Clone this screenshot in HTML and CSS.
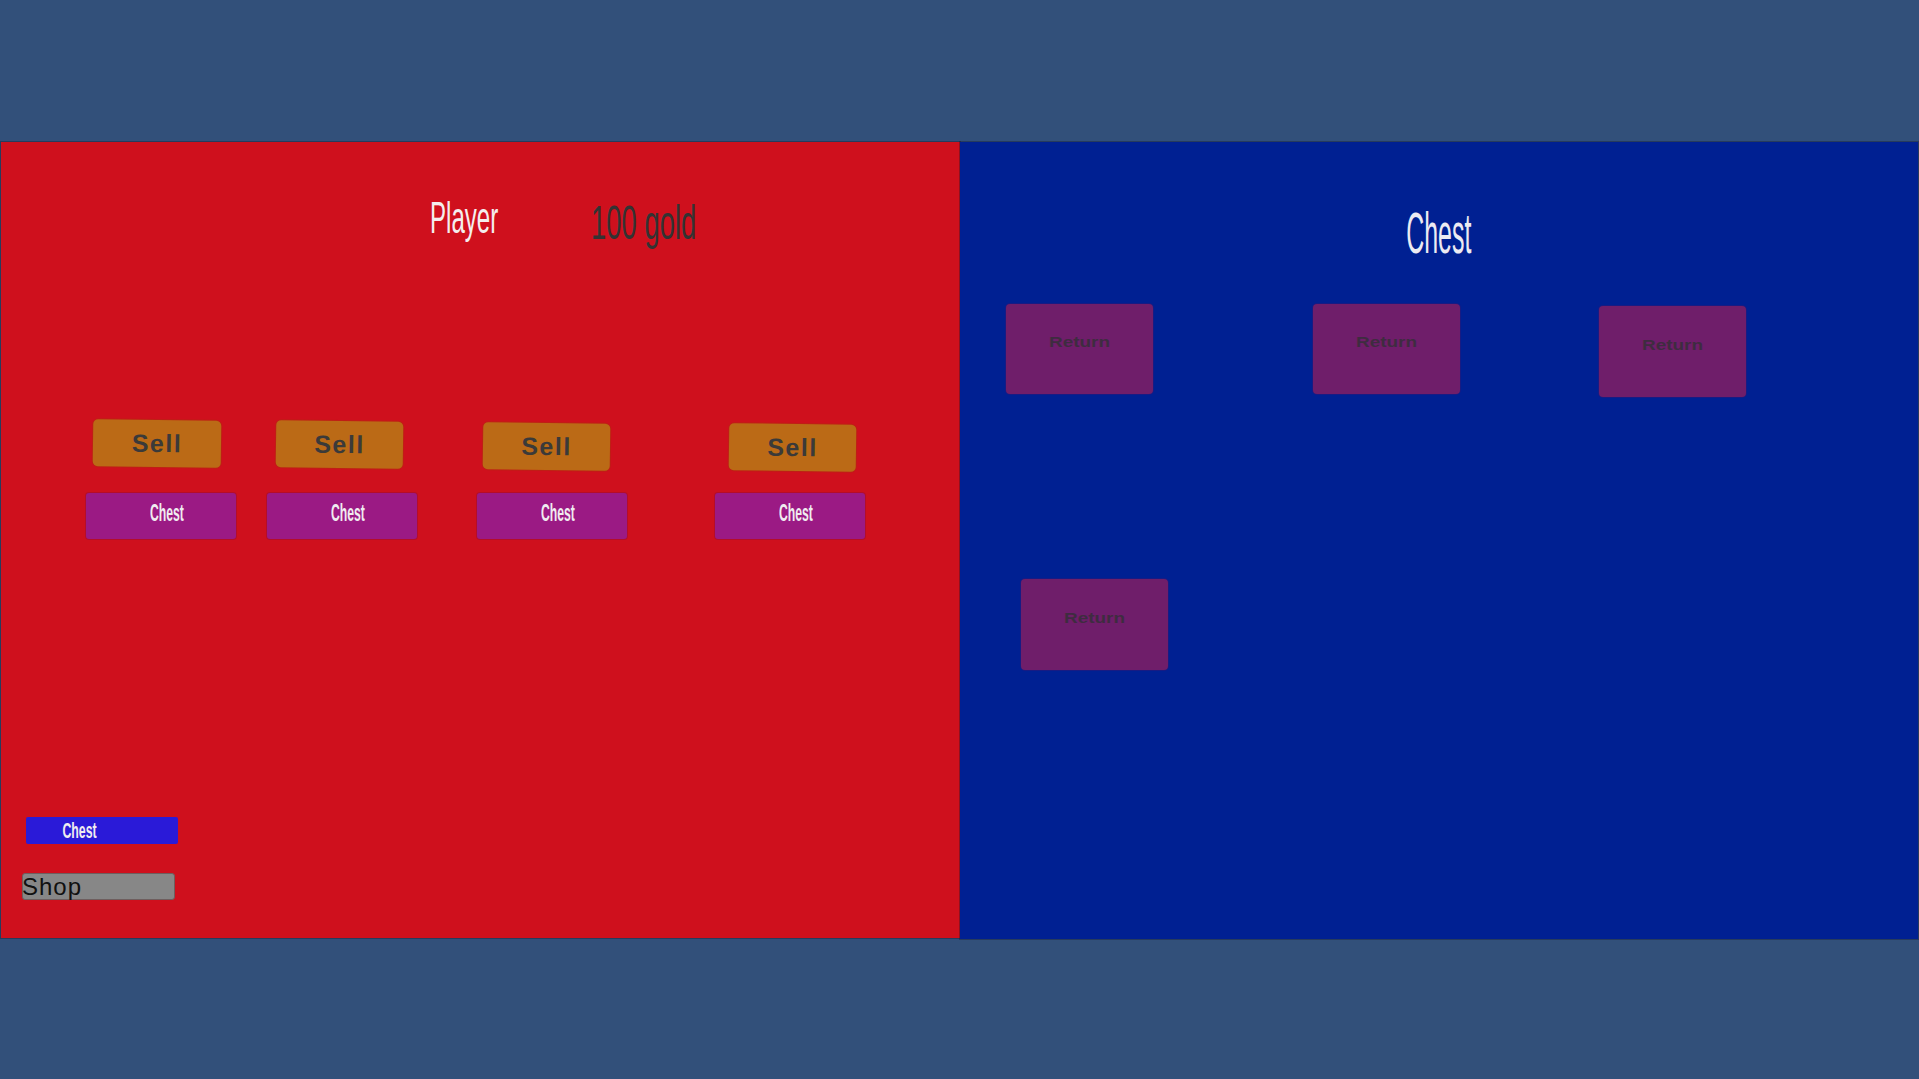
FILE: index.html
```html
<!DOCTYPE html>
<html lang="en">
<head>
    <meta charset="UTF-8">
    <meta name="viewport" content="width=device-width, initial-scale=1.0">
    <title>Player / Chest</title>
    <link rel="stylesheet" href="styles.css">
</head>
<body>
    <div class="screen">
        <div class="panel player-panel">
            <div class="player-head">
                <div class="player-name"><span>Player</span></div>
                <div class="gold"><span>100 gold</span></div>
            </div>

            <div class="slots">
                <div class="slot">
                    <button class="btn-sell">Sell</button>
                    <button class="btn-chest"><span>Chest</span></button>
                </div>
                <div class="slot">
                    <button class="btn-sell">Sell</button>
                    <button class="btn-chest"><span>Chest</span></button>
                </div>
                <div class="slot">
                    <button class="btn-sell">Sell</button>
                    <button class="btn-chest"><span>Chest</span></button>
                </div>
                <div class="slot">
                    <button class="btn-sell">Sell</button>
                    <button class="btn-chest"><span>Chest</span></button>
                </div>
            </div>

            <div class="nav">
                <button class="btn-open-chest"><span>Chest</span></button>
                <button class="btn-shop">Shop</button>
            </div>
        </div>

        <div class="panel chest-panel">
            <div class="chest-title"><span>Chest</span></div>
            <div class="chest-row">
                <button class="btn-return"><span>Return</span></button>
                <button class="btn-return"><span>Return</span></button>
                <button class="btn-return"><span>Return</span></button>
            </div>
            <div class="chest-row second">
                <button class="btn-return"><span>Return</span></button>
            </div>
        </div>
    </div>
</body>
</html>
```

FILE: styles.css
```css
body {
    margin: 0;
    background-color: #32507a;
    font-family: "Liberation Sans", Arial, sans-serif;
    height: 1079px;
    overflow: hidden;
}
button {
    font-family: "Liberation Sans", Arial, sans-serif;
    border: none;
    padding: 0;
    cursor: pointer;
}
.screen {
    display: flex;
    padding: 142px 1px 0 1px;
}
.panel {
    height: 796px;
    display: flex;
    flex-direction: column;
    box-shadow: 0 0 0 1px rgba(20, 20, 40, 0.35);
}
.player-panel {
    width: 959px;
    background-color: #cf101d;
}
.chest-panel {
    flex: 1;
    height: 797px;
    background-color: #002092;
}

/* header */
.player-head {
    display: flex;
    align-items: flex-start;
    padding: 53px 0 0 429px;
}
.player-name,
.gold {
    line-height: 1;
    white-space: nowrap;
}
.player-name span,
.gold span,
.chest-title span {
    display: inline-block;
    transform-origin: left center;
}
.player-name {
    width: 68px;
    font-size: 45px;
    color: #f4eeee;
}
.player-name span {
    transform: scaleX(0.535);
}
.gold {
    width: 105px;
    margin: 3px 0 0 93px;
    font-size: 49px;
    color: #333;
}
.gold span {
    transform: scaleX(0.56);
}

/* item slots */
.slots {
    display: flex;
    align-items: flex-start;
    margin: 173px 0 0 85px;
}
.slot {
    width: 150px;
    display: flex;
    flex-direction: column;
}
.slot:nth-child(2) { margin-left: 31px; }
.slot:nth-child(3) { margin-left: 60px; }
.slot:nth-child(4) { margin-left: 88px; }

.btn-sell {
    width: 128px;
    height: 47px;
    margin: 0 0 26px 7px;
    background-color: #bb6a16;
    border-radius: 5px;
    color: #3b3a39;
    font-size: 25px;
    font-weight: bold;
    letter-spacing: 1.5px;
    transform: rotate(0.8deg);
    box-shadow: 0 0 0 1px rgba(160, 60, 10, 0.35);
}
.slot:nth-child(2) .btn-sell { width: 127px; margin: 1px 0 25px 9px; }
.slot:nth-child(3) .btn-sell { width: 127px; margin: 3px 0 23px 6px; }
.slot:nth-child(4) .btn-sell { width: 127px; margin: 4px 0 22px 14px; }

.btn-chest {
    width: 150px;
    height: 46px;
    display: flex;
    align-items: center;
    justify-content: center;
    padding: 0 0 6px 12px;
    background-color: #9b1a84;
    border-radius: 3px;
    box-shadow: 0 0 0 1px rgba(140, 10, 60, 0.4);
}
.btn-chest span,
.btn-open-chest span {
    display: inline-block;
    line-height: 1;
    font-weight: bold;
    color: #f0ecf0;
    transform: scaleX(0.53);
}
.btn-chest span {
    font-size: 23px;
}

/* bottom nav */
.nav {
    margin-top: auto;
    padding-bottom: 38px;
    display: flex;
    flex-direction: column;
    align-items: flex-start;
}
.btn-open-chest {
    width: 152px;
    height: 27px;
    margin-left: 25px;
    display: flex;
    align-items: center;
    justify-content: center;
    padding: 0 45px 0 0;
    background-color: #2a1ad8;
    border-radius: 2px;
}
.btn-open-chest span {
    font-size: 22px;
    transform: scaleX(0.56);
}
.btn-shop {
    width: 153px;
    height: 27px;
    margin: 29px 0 0 21px;
    padding: 0;
    text-align: left;
    text-indent: -1px;
    background-color: #878787;
    border: 1px solid #6e5e5e;
    border-radius: 3px;
    color: #111;
    font-size: 24px;
    line-height: 25px;
    letter-spacing: 1px;
}

/* chest side */
.chest-title {
    padding-top: 62px;
    text-align: center;
    line-height: 1;
    font-size: 58px;
    color: #ecebf2;
    white-space: nowrap;
}
.chest-title span {
    transform-origin: center;
    transform: scaleX(0.43);
}
.chest-row {
    display: flex;
    align-items: flex-start;
    margin: 42px 0 0 46px;
}
.chest-row.second {
    margin: 182px 0 0 61px;
}
.btn-return {
    width: 147px;
    height: 90px;
    display: flex;
    align-items: center;
    justify-content: center;
    padding-bottom: 14px;
    background-color: #6f1e6a;
    border-radius: 4px;
    box-shadow: 0 0 0 1px rgba(60, 20, 110, 0.4);
}
.chest-row .btn-return:nth-child(2) { margin-left: 160px; }
.chest-row .btn-return:nth-child(3) { margin: 2px 0 0 139px; height: 91px; }
.chest-row.second .btn-return { height: 91px; }
.btn-return span {
    display: inline-block;
    font-size: 14px;
    font-weight: bold;
    line-height: 1;
    color: #3e2c40;
    transform: scaleX(1.35);
}
```
